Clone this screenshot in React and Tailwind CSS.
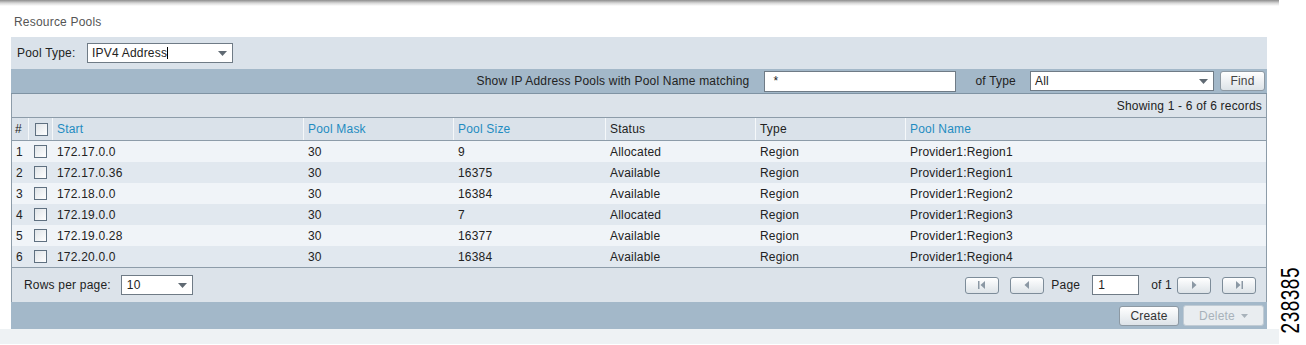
import React from "react";

const rows = [
  ["1", "172.17.0.0", "30", "9", "Allocated", "Region", "Provider1:Region1"],
  ["2", "172.17.0.36", "30", "16375", "Available", "Region", "Provider1:Region1"],
  ["3", "172.18.0.0", "30", "16384", "Available", "Region", "Provider1:Region2"],
  ["4", "172.19.0.0", "30", "7", "Allocated", "Region", "Provider1:Region3"],
  ["5", "172.19.0.28", "30", "16377", "Available", "Region", "Provider1:Region3"],
  ["6", "172.20.0.0", "30", "16384", "Available", "Region", "Provider1:Region4"],
];

const cols = "grid grid-cols-[16px_24px_251px_150px_152px_150px_150px_361px]";

function Check() {
  return (
    <span className="block w-[13px] h-[13px] border border-[#5f7080] bg-gradient-to-br from-[#dfe4e8] to-white" />
  );
}

function Caret() {
  return (
    <svg width="9" height="5" viewBox="0 0 9 5" className="shrink-0">
      <path d="M0 0h9L4.5 5z" fill="#606a73" />
    </svg>
  );
}

function NavBtn({ kind }) {
  return (
    <button className="w-[34px] h-[17px] rounded-[3px] border border-[#7d8c99] bg-gradient-to-b from-white to-[#dde3e8] flex items-center justify-center">
      <svg width="12" height="8" viewBox="0 0 12 8">
        {kind === "first" && (
          <g fill="#8b98a4">
            <rect x="2" y="0" width="1.5" height="8" />
            <path d="M9 0v8L4.5 4z" />
          </g>
        )}
        {kind === "prev" && <path d="M8 0v8L3.5 4z" fill="#8b98a4" />}
        {kind === "next" && <path d="M4 0v8L8.5 4z" fill="#8b98a4" />}
        {kind === "last" && (
          <g fill="#8b98a4">
            <path d="M3 0v8L7.5 4z" />
            <rect x="8.5" y="0" width="1.5" height="8" />
          </g>
        )}
      </svg>
    </button>
  );
}

export default function App() {
  return (
    <div className="relative w-[1306px] h-[345px] bg-white overflow-hidden font-['Liberation_Sans',Arial,sans-serif] text-[12px] tracking-[0.2px] text-[#222]">
      <div className="w-[1279px] h-[6px] bg-gradient-to-b from-[#8d8d8d] via-[#d6d6d6] to-white" />
      <div className="h-[31px] pl-[14px] flex items-center text-[#555] text-[12px]">Resource Pools</div>

      <div className="ml-[11px] w-[1256px]">
        {/* pool type */}
        <div className="h-[32px] bg-[#dae2ea] flex items-center pl-[6px]">
          <span className="w-[70px]">Pool Type:</span>
          <div className="w-[146px] h-[20px] bg-white border border-[#6f7b86] flex items-center justify-between pl-[4px] pr-[5px]">
            <span>IPV4 Address<span className="inline-block w-px h-[12px] bg-black align-[-2px]" /></span>
            <Caret />
          </div>
        </div>

        {/* filter bar */}
        <div className="h-[25px] bg-[#a3b8c9] border-b border-[#7f93a3] flex items-center justify-end pr-[2px]">
          <span className="mr-[15px]">Show IP Address Pools with Pool Name matching</span>
          <div className="w-[192px] h-[21px] bg-white border border-[#6f7b86] pl-[8px] leading-[18px]">*</div>
          <span className="ml-[19px] mr-[14px]">of Type</span>
          <div className="w-[184px] h-[20px] bg-white border border-[#6f7b86] flex items-center justify-between pl-[4px] pr-[5px]">
            <span>All</span>
            <Caret />
          </div>
          <button className="ml-[6px] w-[45px] h-[20px] rounded-[3px] border border-[#8d99a3] bg-gradient-to-b from-white to-[#dde3e8] text-[#444]">Find</button>
        </div>

        <div className="border-x border-[#8d9ca9]">
          <div className="h-[23px] bg-[#dce3ea] flex items-center justify-end pr-[4px]">Showing 1 - 6 of 6 records</div>

          {/* header */}
          <div className={`${cols} h-[24px] bg-[#dae2ea] border-y border-[#8d9ca9]`}>
            <div className="flex items-center pl-[3px]">#</div>
            <div className="flex items-center pl-[6px] border-l border-[#f5f8fa]">
              <Check />
            </div>
            {["Start", "Pool Mask", "Pool Size", "Status", "Type", "Pool Name"].map((h, i) => (
              <div
                key={h}
                className={`flex items-center pl-[4px] border-l border-[#f5f8fa] ${i === 3 || i === 4 ? "text-[#222]" : "text-[#1f8cc1]"}`}
              >
                {h}
              </div>
            ))}
          </div>

          {rows.map((r, idx) => (
            <div key={r[0]} className={`${cols} h-[21px] ${idx % 2 === 0 ? "bg-[#f0f4f8]" : "bg-[#e1e8ef]"}`}>
              <div className="flex items-center pl-[4px]">{r[0]}</div>
              <div className="flex items-center pl-[6px]">
                <Check />
              </div>
              {r.slice(1).map((c, j) => (
                <div key={j} className="flex items-center pl-[5px]">
                  {c}
                </div>
              ))}
            </div>
          ))}

          {/* footer */}
          <div className="h-[35px] bg-[#dce3ea] border-t border-[#8d9ca9] flex items-center justify-between pl-[12px] pr-[10px]">
            <div className="flex items-center">
              <span className="mr-[10px]">Rows per page:</span>
              <div className="w-[72px] h-[20px] bg-white border border-[#6f7b86] flex items-center justify-between pl-[5px] pr-[5px]">
                <span>10</span>
                <Caret />
              </div>
            </div>
            <div className="flex items-center">
              <NavBtn kind="first" />
              <span className="w-[11px]" />
              <NavBtn kind="prev" />
              <span className="ml-[7px] mr-[12px]">Page</span>
              <div className="w-[47px] h-[20px] bg-white border border-[#6f7b86] pl-[5px] leading-[18px]">1</div>
              <span className="ml-[12px] mr-[5px]">of 1</span>
              <NavBtn kind="next" />
              <span className="w-[11px]" />
              <NavBtn kind="last" />
            </div>
          </div>
        </div>

        {/* action bar */}
        <div className="h-[27px] bg-[#a3b8c9] flex items-center justify-end pr-[3px]">
          <button className="w-[60px] h-[20px] rounded-[3px] border border-[#8d99a3] bg-gradient-to-b from-white to-[#dde3e8] text-[#333]">Create</button>
          <button className="ml-[4px] w-[81px] h-[21px] rounded-[3px] border border-[#c0cbd4] bg-[#e9edf0] text-[#a8b2ba] flex items-center justify-center gap-[6px]">
            Delete
            <svg width="7" height="4" viewBox="0 0 7 4"><path d="M0 0h7L3.5 4z" fill="#a8b2ba" /></svg>
          </button>
        </div>
      </div>
      <div className="h-[15px] bg-[#eef2f4] w-[1279px]" />

      <div className="absolute left-[1281px] top-[267px] [writing-mode:vertical-rl] rotate-180 scale-x-[1.35] text-[19px] text-black leading-none tracking-[0.5px]">
        238385
      </div>
    </div>
  );
}
